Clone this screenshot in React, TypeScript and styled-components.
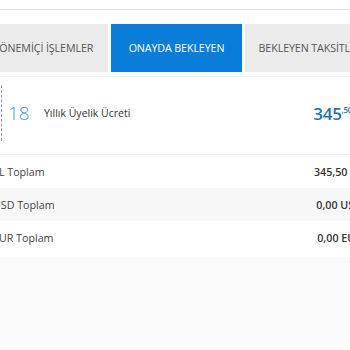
import styled, { createGlobalStyle } from "styled-components";

const GlobalStyle = createGlobalStyle`
  html, body {
    margin: 0;
    padding: 0;
    background: #fafafa;
    font-family: "Open Sans", "Liberation Sans", sans-serif;
    overflow: hidden;
  }
`;

const Page = styled.div`
  width: 350px;
  height: 350px;
  overflow: hidden;
`;

const Panel = styled.div`
  width: 399px;
  margin-left: -23px;
  background: #fff;
  padding-bottom: 3px;
`;

const TopBar = styled.div`
  height: 9px;
  border-bottom: 1px solid #dcdcdc;
  background: #fff;
`;

const Tabs = styled.div`
  display: grid;
  grid-template-columns: 131px 131px 131px;
  column-gap: 3px;
  margin-top: 14px;
  padding-bottom: 4px;
  border-bottom: 1px solid #f2f2f2;
`;

const Tab = styled.div<{ $active?: boolean }>`
  height: 48px;
  display: flex;
  align-items: center;
  justify-content: center;
  white-space: nowrap;
  font-size: 10.7px;
  letter-spacing: -0.1px;
  background: ${(p) => (p.$active ? "#0a7cd9" : "#ebebeb")};
  color: ${(p) => (p.$active ? "#fff" : "#555")};
`;

const Item = styled.div`
  display: flex;
  align-items: center;
  height: 78px;
  padding: 0 24px 5px 24px;
  box-sizing: border-box;
  border-bottom: 1px solid #f0f0f0;
`;

const DateCell = styled.div`
  height: 56px;
  border-left: 1.5px dashed #9a9a9a;
  display: flex;
  align-items: center;
  padding-left: 6px;
  width: 36px;
  font-size: 19px;
  font-weight: 300;
  color: #4a97d3;
`;

const Title = styled.div`
  flex: 1;
  font-size: 10.5px;
  color: #333;
`;

const Amount = styled.div`
  font-size: 17px;
  font-weight: 600;
  color: #1f6fb4;
  letter-spacing: -0.3px;

  sup {
    font-size: 8px;
    vertical-align: 7px;
    line-height: 0;
  }
`;

const TotalRow = styled.div<{ $shaded?: boolean }>`
  display: flex;
  align-items: center;
  justify-content: space-between;
  height: 33px;
  padding: 0 14px 0 16px;
  background: ${(p) => (p.$shaded ? "#f7f7f7" : "#fff")};
  font-size: 10.7px;
  color: #444;
`;

const TotalValue = styled.span`
  font-weight: 600;
  color: #333;
`;

const totals = [
  { label: "TL Toplam", value: "345,50 TL" },
  { label: "USD Toplam", value: "0,00 USD" },
  { label: "EUR Toplam", value: "0,00 EUR" },
];

export default function App() {
  return (
    <Page>
      <GlobalStyle />
      <Panel>
        <TopBar />
        <Tabs>
          <Tab>DÖNEMİÇİ İŞLEMLER</Tab>
          <Tab $active>ONAYDA BEKLEYEN</Tab>
          <Tab>BEKLEYEN TAKSİTLER</Tab>
        </Tabs>
        <Item>
          <DateCell>18</DateCell>
          <Title>Yıllık Üyelik Ücreti</Title>
          <Amount>
            345<sup>,50</sup>
          </Amount>
        </Item>
        {totals.map((t, i) => (
          <TotalRow key={t.label} $shaded={i === 1}>
            <span>{t.label}</span>
            <TotalValue>{t.value}</TotalValue>
          </TotalRow>
        ))}
      </Panel>
    </Page>
  );
}
